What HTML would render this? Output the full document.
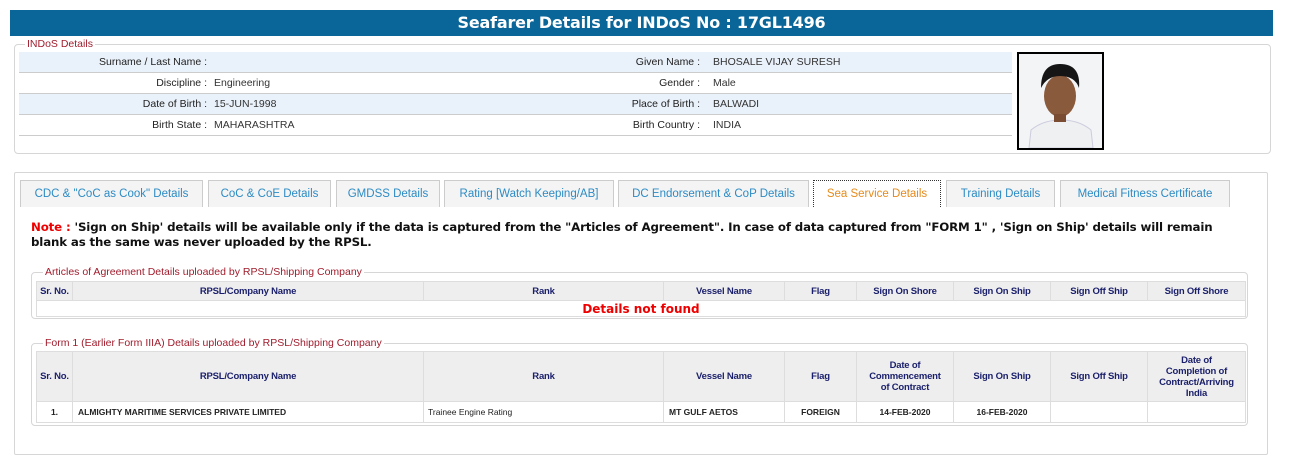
<!DOCTYPE html>
<html><head><meta charset="utf-8"><style>
*{box-sizing:border-box}
body{margin:0;width:1294px;height:456px;background:#fff;font-family:"Liberation Sans",Arial,sans-serif;position:relative;overflow:hidden}
.abs{position:absolute}
.hdr{left:10px;top:10px;width:1263px;height:26px;background:#0a6699;color:#fff;font:bold 16px "DejaVu Sans",sans-serif;text-align:center;line-height:26px;letter-spacing:-0.2px}
.fs{border:1px solid #d6d6d6;border-radius:4px}
.lg{background:#fff;color:#a01c2c;font-size:10.5px;padding:0 2px;line-height:11px}
.row{left:19px;width:993px;height:21px;border-bottom:1px solid #ccc;font-size:10.5px;line-height:20px;color:#333}
.row.b{background:#e9f1fa}
.l{position:absolute;text-align:right;color:#222}
.v{position:absolute}
.tab{top:180px;height:27px;background:#f4f4f4;border:1px solid #ccc;border-bottom:none;color:#2d8bc4;font-size:11.5px;text-align:center;line-height:26px}
.note{left:31px;top:220px;width:1215px;font:bold 11.8px "DejaVu Sans",sans-serif;line-height:15px;color:#111;letter-spacing:-0.15px}
table{border-collapse:collapse;position:absolute;table-layout:fixed}
td,th{border:1px solid #ddd;padding:0 1px;text-align:center}
th{background:#eee;color:#1a1f6b;font-weight:bold;font-size:9.5px;letter-spacing:-0.2px}
td{font-size:8.5px;font-weight:bold;color:#222}
</style></head><body>
<div class="abs hdr">Seafarer Details for INDoS No : 17GL1496</div>

<div class="abs fs" style="left:14px;top:44px;width:1257px;height:110px"></div>
<div class="abs lg" style="left:25px;top:39px">INDoS Details</div>
<div class="abs row b" style="top:52px"><span class="l" style="right:805px">Surname / Last Name :</span><span class="l" style="right:312px">Given Name :</span><span class="v" style="left:694px">BHOSALE VIJAY SURESH</span></div>
<div class="abs row" style="top:73px"><span class="l" style="right:805px">Discipline :</span><span class="v" style="left:195px">Engineering</span><span class="l" style="right:312px">Gender :</span><span class="v" style="left:694px">Male</span></div>
<div class="abs row b" style="top:94px"><span class="l" style="right:805px">Date of Birth :</span><span class="v" style="left:195px">15-JUN-1998</span><span class="l" style="right:312px">Place of Birth :</span><span class="v" style="left:694px">BALWADI</span></div>
<div class="abs row" style="top:115px"><span class="l" style="right:805px">Birth State :</span><span class="v" style="left:195px">MAHARASHTRA</span><span class="l" style="right:312px">Birth Country :</span><span class="v" style="left:694px">INDIA</span></div>
<div class="abs" style="left:1017px;top:52px;width:87px;height:98px;border:2px solid #000;background:#f3f4f6;overflow:hidden">
<svg width="83" height="94"><path d="M10 94 L12 76 Q24 66 42 66 Q60 66 72 76 L74 94Z" fill="#eef0f2" stroke="#ccd" /><ellipse cx="41" cy="42" rx="16" ry="21" fill="#8a5a3c"/><path d="M22 34 Q22 10 41 10 Q62 10 60 34 Q56 22 41 22 Q28 22 22 34Z" fill="#151515"/><rect x="35" y="60" width="12" height="8" fill="#7a4c32"/></svg></div>

<div class="abs fs" style="left:14px;top:172px;width:1254px;height:283px;border-radius:2px"></div>
<div class="abs tab" style="left:20px;width:183px">CDC &amp; "CoC as Cook" Details</div>
<div class="abs tab" style="left:208px;width:123px">CoC &amp; CoE Details</div>
<div class="abs tab" style="left:336px;width:104px">GMDSS Details</div>
<div class="abs tab" style="left:444px;width:170px">Rating [Watch Keeping/AB]</div>
<div class="abs tab" style="left:618px;width:191px">DC Endorsement &amp; CoP Details</div>
<div class="abs tab" style="left:813px;width:128px;background:#fff;border:1px dotted #333;border-bottom:none;color:#e68a1a">Sea Service Details</div>
<div class="abs tab" style="left:946px;width:109px">Training Details</div>
<div class="abs tab" style="left:1060px;width:170px">Medical Fitness Certificate</div>

<div class="abs note"><span style="color:#e00">Note : </span>'Sign on Ship' details will be available only if the data is captured from the "Articles of Agreement". In case of data captured from "FORM 1" , 'Sign on Ship' details will remain blank as the same was never uploaded by the RPSL.</div>

<div class="abs fs" style="left:31px;top:272px;width:1217px;height:47px"></div>
<div class="abs lg" style="left:43px;top:267px">Articles of Agreement Details uploaded by RPSL/Shipping Company</div>
<table style="left:36px;top:281px;width:1209px">
<colgroup><col style="width:36px"><col style="width:351px"><col style="width:240px"><col style="width:121px"><col style="width:72px"><col style="width:97px"><col style="width:97px"><col style="width:97px"><col style="width:98px"></colgroup>
<tr style="height:19px"><th style="white-space:nowrap">Sr. No.</th><th>RPSL/Company Name</th><th>Rank</th><th>Vessel Name</th><th>Flag</th><th>Sign On Shore</th><th>Sign On Ship</th><th>Sign Off Ship</th><th>Sign Off Shore</th></tr>
<tr style="height:16px"><td colspan="9" style="color:#e00;font:bold 12px 'DejaVu Sans',sans-serif;line-height:14px">Details not found</td></tr>
</table>

<div class="abs fs" style="left:31px;top:343px;width:1217px;height:83px"></div>
<div class="abs lg" style="left:43px;top:338px">Form 1 (Earlier Form IIIA) Details uploaded by RPSL/Shipping Company</div>
<table style="left:36px;top:351px;width:1209px">
<colgroup><col style="width:36px"><col style="width:351px"><col style="width:240px"><col style="width:121px"><col style="width:72px"><col style="width:97px"><col style="width:97px"><col style="width:97px"><col style="width:98px"></colgroup>
<tr style="height:50px"><th style="white-space:nowrap">Sr. No.</th><th>RPSL/Company Name</th><th>Rank</th><th>Vessel Name</th><th>Flag</th><th>Date of<br>Commencement<br>of Contract</th><th>Sign On Ship</th><th>Sign Off Ship</th><th>Date of<br>Completion of<br>Contract/Arriving<br>India</th></tr>
<tr style="height:21px"><td>1.</td><td style="text-align:left;padding-left:5px">ALMIGHTY MARITIME SERVICES PRIVATE LIMITED</td><td style="text-align:left;font-weight:normal;padding-left:4px">Trainee Engine Rating</td><td style="text-align:left;padding-left:5px">MT GULF AETOS</td><td>FOREIGN</td><td>14-FEB-2020</td><td>16-FEB-2020</td><td></td><td></td></tr>
</table>
</body></html>
